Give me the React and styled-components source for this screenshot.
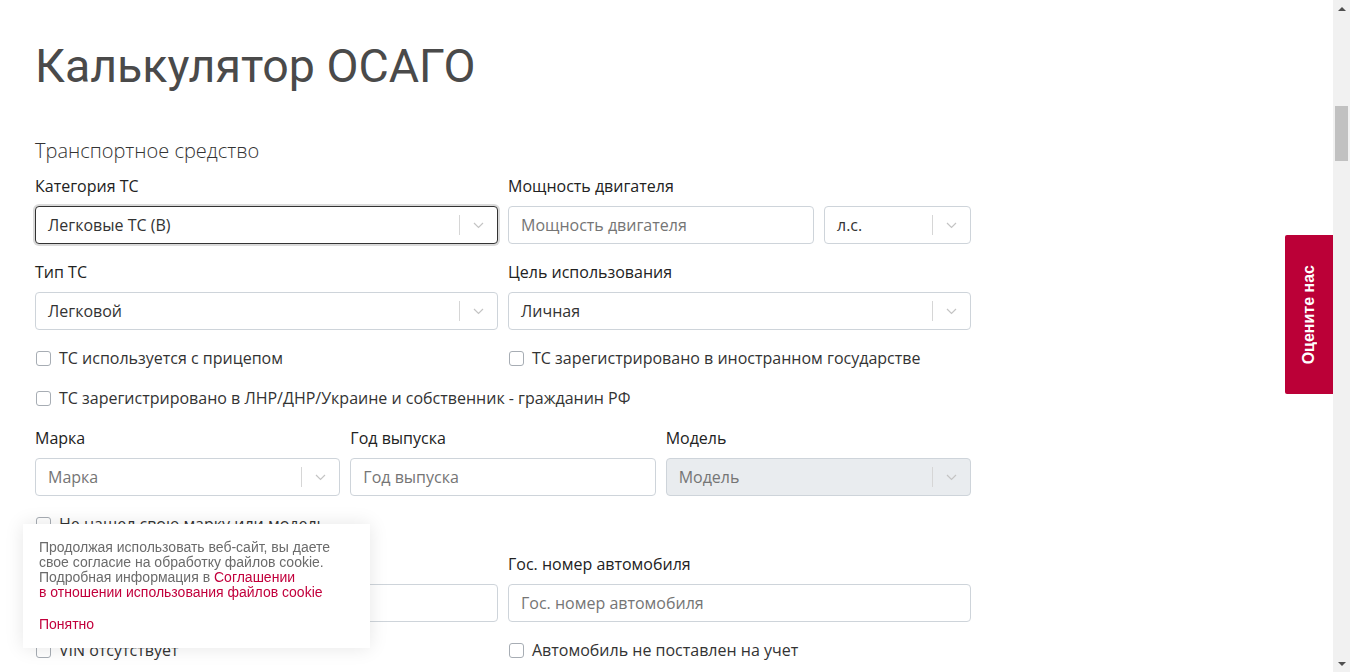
import React from 'react';
import styled, { createGlobalStyle } from 'styled-components';

const GlobalStyle = createGlobalStyle`
  html, body {
    margin: 0;
    padding: 0;
    background: #fff;
  }
  body {
    font-family: "Open Sans", "Liberation Sans", sans-serif;
    color: #333;
  }
  * {
    box-sizing: border-box;
  }
`;

const Page = styled.main`
  padding: 38px 35px 0;
  min-height: 7800px;
`;

const Title = styled.h1`
  margin: 0;
  font-family: Roboto, "Liberation Sans", sans-serif;
  font-weight: 400;
  font-size: 46.5px;
  line-height: 56px;
  color: #4a4a4a;
`;

const Form = styled.section`
  width: 936px;
  margin-top: 43px;
`;

const SectionTitle = styled.h2`
  margin: 0 0 10px;
  font-family: "Open Sans", sans-serif;
  font-weight: 300;
  font-size: 20px;
  line-height: 28px;
  color: #333;
`;

const Fields = styled.div`
  display: flex;
  flex-direction: column;
  gap: 17px;
`;

const Row = styled.div`
  display: grid;
  grid-template-columns: ${(p) => p.$cols || '1fr 1fr'};
  gap: 10px;
`;

const Field = styled.div`
  display: flex;
  flex-direction: column;
  min-width: 0;
`;

const Label = styled.label`
  font-size: 16px;
  line-height: 22px;
  color: #222;
  margin-bottom: 9px;
`;

const InputGroup = styled.div`
  display: grid;
  grid-template-columns: 1fr 147px;
  gap: 10px;
`;

const Input = styled.input`
  height: 38px;
  width: 100%;
  border: 1px solid #ced4da;
  border-radius: 4px;
  padding: 0 12px;
  font-family: "Open Sans", sans-serif;
  font-size: 16px;
  color: #333;
  background: #fff;
  outline: none;

  &::placeholder {
    color: #757575;
  }
`;

const Control = styled.div`
  height: 38px;
  display: flex;
  align-items: center;
  border: 1px solid ${(p) => (p.$focused ? '#333' : '#ced4da')};
  border-radius: 4px;
  background: ${(p) => (p.$disabled ? '#e9ecef' : '#fff')};
  box-shadow: ${(p) => (p.$focused ? '0 0 0 2px #dadada' : 'none')};
`;

const Value = styled.span`
  flex: 1;
  padding: 0 12px;
  font-size: 16px;
  color: ${(p) => (p.$placeholder ? '#757575' : '#333')};
  white-space: nowrap;
  overflow: hidden;
`;

const Separator = styled.span`
  width: 1px;
  align-self: stretch;
  margin: 8px 0;
  background: #d6d6d6;
`;

const Indicator = styled.span`
  width: 37px;
  display: flex;
  align-items: center;
  justify-content: center;
`;

const Check = styled.label`
  display: flex;
  align-items: center;
  gap: 8px;
  font-size: 16px;
  line-height: 23px;
  color: #333;
`;

const Box = styled.span`
  width: 15px;
  height: 15px;
  margin-left: 1px;
  border: 1px solid #a7adb4;
  border-radius: 3px;
  background: #fff;
  flex: none;
`;

const Cookie = styled.div`
  position: fixed;
  left: 23px;
  bottom: 24px;
  width: 347px;
  padding: 16px;
  background: #fff;
  box-shadow: 0 0 18px rgba(0, 0, 0, 0.1);
  font-family: "Liberation Sans", Arial, sans-serif;
  font-size: 14px;
  line-height: 15px;
  color: #6b6b6b;
`;

const CookieLink = styled.a`
  color: #c2003c;
  text-decoration: none;
`;

const CookieButton = styled.button`
  display: block;
  margin-top: 17px;
  padding: 0;
  border: 0;
  background: none;
  font: inherit;
  color: #c2003c;
  cursor: pointer;
`;

const RateTab = styled.button`
  position: fixed;
  right: 17px;
  top: 235px;
  width: 48px;
  height: 159px;
  border: 0;
  border-radius: 2px 0 0 2px;
  background: #bb0037;
  color: #fff;
  font-family: "Liberation Sans", Arial, sans-serif;
  font-weight: 700;
  font-size: 16px;
  display: flex;
  align-items: center;
  justify-content: center;
  padding: 0;
  cursor: pointer;

  span {
    writing-mode: vertical-rl;
    transform: rotate(180deg);
  }
`;

/* window scrollbar, drawn since the page is photographed without one */
const Scrollbar = styled.div`
  position: fixed;
  top: 0;
  right: 0;
  bottom: 0;
  width: 17px;
  background: #f1f1f1;
  display: flex;
  flex-direction: column;
`;

const ScrollButton = styled.div`
  height: 17px;
  flex: none;
  display: flex;
  align-items: center;
  justify-content: center;
`;

const ScrollTrack = styled.div`
  flex: 1;
  padding: 89px 2px 0;
`;

const ScrollThumb = styled.div`
  height: 55px;
  background: #c1c1c1;
`;

const Arrow = ({ down }) => (
  <svg width="8" height="4" viewBox="0 0 8 4">
    <path d={down ? 'M0 0L4 4L8 0Z' : 'M0 4L4 0L8 4Z'} fill="#505050" />
  </svg>
);

const Chevron = () => (
  <svg width="11" height="7" viewBox="0 0 11 7" fill="none">
    <path d="M1 1l4.5 4.5L10 1" stroke="#c4c4c4" strokeWidth="1.2" />
  </svg>
);

const Select = ({ value, placeholder, focused, disabled }) => (
  <Control $focused={focused} $disabled={disabled}>
    <Value $placeholder={!value}>{value || placeholder}</Value>
    <Separator />
    <Indicator>
      <Chevron />
    </Indicator>
  </Control>
);

const Checkbox = ({ children }) => (
  <Check>
    <Box />
    {children}
  </Check>
);

export default function App() {
  return (
    <>
      <GlobalStyle />
      <Page>
        <Title>Калькулятор ОСАГО</Title>
        <Form>
          <SectionTitle>Транспортное средство</SectionTitle>
          <Fields>
            <Row>
              <Field>
                <Label>Категория ТС</Label>
                <Select value="Легковые ТС (В)" focused />
              </Field>
              <Field>
                <Label>Мощность двигателя</Label>
                <InputGroup>
                  <Input placeholder="Мощность двигателя" />
                  <Select value="л.с." />
                </InputGroup>
              </Field>
            </Row>
            <Row>
              <Field>
                <Label>Тип ТС</Label>
                <Select value="Легковой" />
              </Field>
              <Field>
                <Label>Цель использования</Label>
                <Select value="Личная" />
              </Field>
            </Row>
            <Row>
              <Checkbox>ТС используется с прицепом</Checkbox>
              <Checkbox>ТС зарегистрировано в иностранном государстве</Checkbox>
            </Row>
            <Checkbox>ТС зарегистрировано в ЛНР/ДНР/Украине и собственник - гражданин РФ</Checkbox>
            <Row $cols="1fr 1fr 1fr">
              <Field>
                <Label>Марка</Label>
                <Select placeholder="Марка" />
              </Field>
              <Field>
                <Label>Год выпуска</Label>
                <Input placeholder="Год выпуска" />
              </Field>
              <Field>
                <Label>Модель</Label>
                <Select placeholder="Модель" disabled />
              </Field>
            </Row>
            <Checkbox>Не нашел свою марку или модель</Checkbox>
            <Row>
              <Field>
                <Label>VIN</Label>
                <Input placeholder="VIN" />
              </Field>
              <Field>
                <Label>Гос. номер автомобиля</Label>
                <Input placeholder="Гос. номер автомобиля" />
              </Field>
            </Row>
            <Row>
              <Checkbox>VIN отсутствует</Checkbox>
              <Checkbox>Автомобиль не поставлен на учет</Checkbox>
            </Row>
          </Fields>
        </Form>
      </Page>

      <RateTab>
        <span>Оцените нас</span>
      </RateTab>

      <Cookie>
        Продолжая использовать веб-сайт, вы даете
        <br />
        свое согласие на обработку файлов cookie.
        <br />
        Подробная информация в <CookieLink href="#">Соглашении</CookieLink>
        <br />
        <CookieLink href="#">в отношении использования файлов cookie</CookieLink>
        <CookieButton>Понятно</CookieButton>
      </Cookie>

      <Scrollbar>
        <ScrollButton>
          <Arrow />
        </ScrollButton>
        <ScrollTrack>
          <ScrollThumb />
        </ScrollTrack>
        <ScrollButton>
          <Arrow down />
        </ScrollButton>
      </Scrollbar>
    </>
  );
}
